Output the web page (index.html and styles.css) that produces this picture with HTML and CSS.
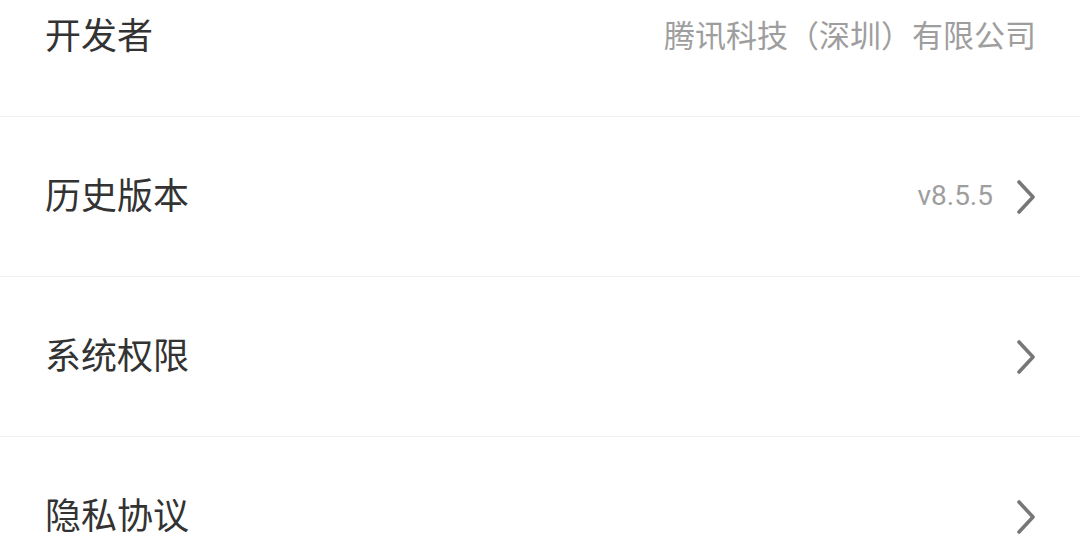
FILE: index.html
```html
<!DOCTYPE html>
<html lang="zh-CN">
  <head>
    <meta charset="utf-8" />
    <meta name="viewport" content="width=device-width, initial-scale=1" />
    <link rel="stylesheet" href="styles.css">
    <title>关于</title>
  </head>
  <body>
    <!-- Lista de informações do aplicativo -->
    <ul class="info-list">
      <li class="info-row">
        <span class="info-row__label">开发者</span>
        <span class="info-row__value">腾讯科技（深圳）有限公司</span>
      </li>
      <li class="info-row info-row--link">
        <span class="info-row__label">历史版本</span>
        <span class="info-row__value info-row__value--version">v8.5.5</span>
        <svg class="info-row__chevron" viewBox="0 0 20 34" width="20" height="34">
          <polyline points="3,2 17,17 3,32" />
        </svg>
      </li>
      <li class="info-row info-row--link">
        <span class="info-row__label">系统权限</span>
        <svg class="info-row__chevron" viewBox="0 0 20 34" width="20" height="34">
          <polyline points="3,2 17,17 3,32" />
        </svg>
      </li>
      <li class="info-row info-row--link">
        <span class="info-row__label">隐私协议</span>
        <svg class="info-row__chevron" viewBox="0 0 20 34" width="20" height="34">
          <polyline points="3,2 17,17 3,32" />
        </svg>
      </li>
    </ul>
  </body>
</html>
```

FILE: styles.css
```css
/* Estilos gerais */
*, *::before, *::after {
  box-sizing: border-box;
}

html, body {
  margin: 0;
  padding: 0;
  height: 100%;
  background: #fff;
  font-family: 'Noto Sans CJK SC', 'Noto Sans', sans-serif;
  overflow: hidden;
}

/* Lista (rolada: a primeira linha aparece cortada) */
.info-list {
  list-style: none;
  margin: -43px 0 0;
  padding: 0;
}

.info-row {
  display: flex;
  align-items: center;
  height: 160px;
  padding: 0 44px 0 45px;
  border-bottom: 1px solid #f2f2f2;
}

/* Os glifos CJK ficam baixos na caixa de linha */
.info-row__label {
  flex: 1;
  font-size: 36px;
  line-height: 1.2;
  padding-bottom: 6px;
  color: #333;
  white-space: nowrap;
}

.info-row__value {
  font-size: 31px;
  line-height: 1.2;
  padding-bottom: 6px;
  color: #9e9e9e;
  white-space: nowrap;
}

.info-row__value--version {
  font-family: Roboto, 'Noto Sans', sans-serif;
  font-size: 28px;
  padding-bottom: 2px;
  margin-right: 23px;
}

.info-row__chevron {
  display: block;
  fill: none;
  stroke: #777;
  stroke-width: 3.6;
  stroke-linecap: round;
  stroke-linejoin: round;
}
```
